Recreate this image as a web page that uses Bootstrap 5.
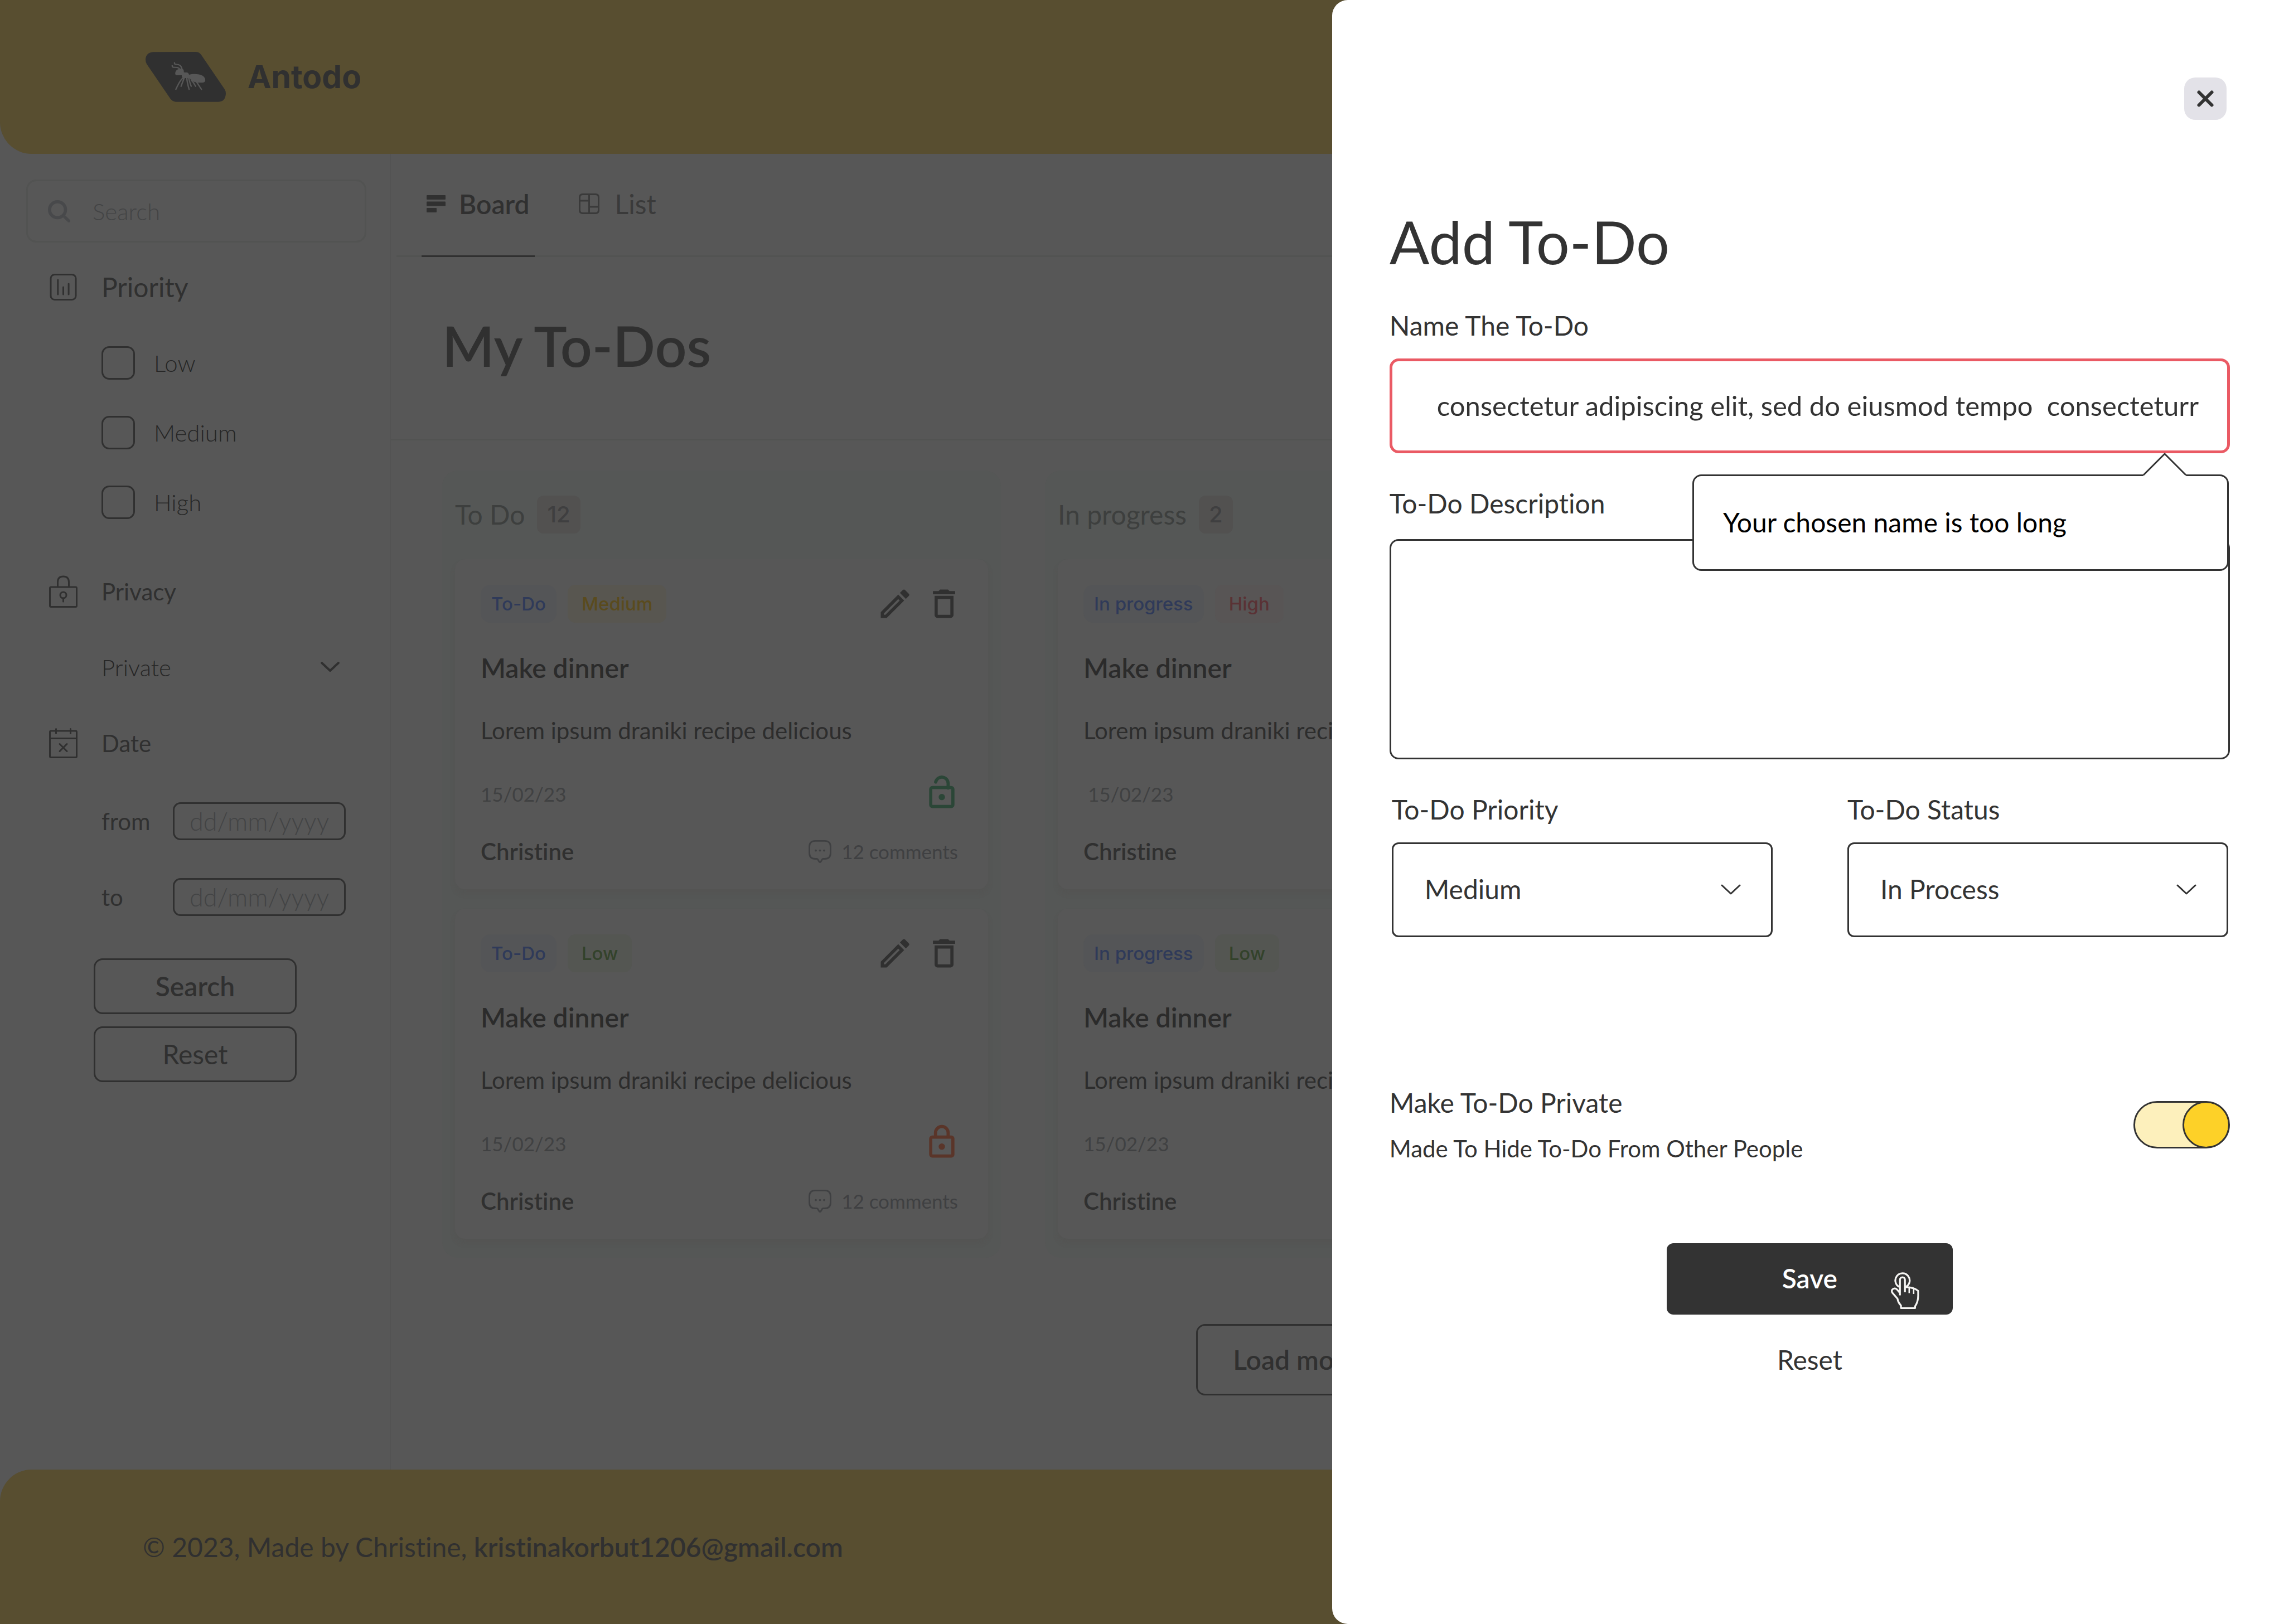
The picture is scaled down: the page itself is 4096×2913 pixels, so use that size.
<!DOCTYPE html>
<html lang="en">
<head>
<meta charset="utf-8">
<meta name="viewport" content="width=device-width, initial-scale=1">
<title>Antodo</title>
<link href="https://cdn.jsdelivr.net/npm/bootstrap@5.3.0/dist/css/bootstrap.min.css" rel="stylesheet">
<style>
:root{--ink:#303030;--dim:#575757;--rule:#525352;--dark:#333}
body{font-family:Lato,"Open Sans",sans-serif;font-size:48px;line-height:60px;font-variant-ligatures:none;color:var(--ink);background:var(--dim)}
.fw-semi{font-weight:600}
.text-m{font-size:42px}
.text-s{font-size:35px}
svg{display:block;flex:none}

/* header and footer */
.brand-bar{height:276px;background:#584e30;border-radius:0 0 57px 57px;padding:0 261px}
.brand-link{gap:39px;color:var(--ink);font:700 57px/60px Inter,sans-serif}
.foot-bar{height:277px;background:#584e30;border-radius:57px 57px 0 0;padding:0 256px}
.foot-bar a{color:var(--ink)}

/* sidebar */
.side{flex:0 0 701px;min-width:0;padding:46px 42px 0 47px;border-right:2px solid #535353}
.search-box{height:113px;border:3px solid var(--rule);border-radius:18px;padding:0 36px;gap:40px}
.bare-input{border:0;background:transparent;padding:0;width:100%;min-width:0;color:var(--ink)}
.side input::placeholder{color:#434445;opacity:1;font-weight:300}
.side-head{height:60px;padding-left:41px;gap:43px}
.side-icon{width:51px}
.side-body{padding-left:135px;padding-right:37px}
.pick{gap:34px;height:60px;margin-bottom:65px;font-weight:300;color:#262626}
.pick .form-check-input{width:60px;height:60px;margin:0;border:3px solid var(--ink);border-radius:14px;background-color:transparent}
.privacy-pick{height:60px;width:100%;border:0;color:#262626;font-weight:300;padding:0;appearance:none;background:url("data:image/svg+xml,%3Csvg xmlns='http://www.w3.org/2000/svg' viewBox='0 0 36 22'%3E%3Cpath d='M3 3l15 14L33 3' fill='none' stroke='%23303030' stroke-width='4' stroke-linecap='round' stroke-linejoin='round'/%3E%3C/svg%3E") no-repeat right 10px center/36px 22px}
.date-row{height:68px}
.date-row + .date-row{margin-top:68px}
.date-row input{width:310px;height:68px;border:3px solid var(--ink);border-radius:14px;background:transparent;padding:0 27px;font-size:45px;color:var(--ink)}
.side-btns{padding:0 125px 0 121px;gap:22px}
.line-btn{border:3px solid var(--ink);border-radius:16px;color:var(--ink);font-size:48px;line-height:60px;padding:17px 0}
.mt-head{margin-top:50px}
.mt-body{margin-top:76px}
.mt-next{margin-top:100px}

/* board */
.board{flex:1 1 0;min-width:0}
.tabs{margin-left:10px;padding-left:45px;gap:79px;border-bottom:3px solid var(--rule)}
.tab{height:185px;margin-bottom:-3px;padding:0 9px 6px 9px;gap:24px;color:var(--ink)}
.tab.is-on{border-bottom:3px solid var(--ink);padding-bottom:3px}
.tab-quiet{padding-left:0;gap:28px;color:#3a3a3a}
.page-title{font-size:100px;line-height:120px;padding:98px 92px 108px;border-bottom:3px solid var(--rule)}
.lanes{display:grid;grid-template-columns:repeat(3,1fr);gap:79px;padding:54px 139px 0 92px}
.lane{background:#555756;border-radius:28px;padding:45px 23px 34px}
.lane-head{height:68px;gap:22px;margin-bottom:46px;color:#3d3f3e}
.count{height:68px;border-radius:12px;background:#525150;padding:0 18px;font:500 40px/68px Inter,sans-serif;color:#3f3f40}
.todo{background:var(--dim);border-radius:18px;padding:46px 45px 38px 46px;box-shadow:0 8px 10px rgba(78,74,74,.2)}
.todo + .todo{margin-top:35px}
.todo h3{font-size:48px;line-height:60px;margin:51px 0 52px;color:#2b2b2b}
.todo-text{margin-bottom:50px;color:#2d2d2d}
.todo-meta{height:68px;margin-bottom:39px;color:#404142;padding-right:4px}
.talk{gap:18px;color:#3f4042;margin-right:9px}
.tag{height:68px;border-radius:14px;padding:0 25px;font:500 33px/68px Inter,sans-serif}
.tag-state{background:#545557;color:#2f3a59;padding:0 19px;border-radius:18px}
.tag-medium{background:#585650;color:#5a4b1e}
.tag-high{background:#585555;color:#5a3235}
.tag-low{background:#545652;color:#33422b}
.gap-tags{gap:20px}
.icon-btn{border:0;background:transparent;padding:0;color:var(--ink)}
.open{color:#2b4637}
.shut{color:#5a3529}
.load{margin:119px 0 0 1444px;width:356px;padding:31px 0}

/* drawer */
.drawer.offcanvas{width:41.68%;border:0;border-radius:28px 0 0 28px;padding:139px 97px 0 103px;color:var(--dark);background:#fff;overflow-y:auto}
.close-btn{width:76px;height:76px;border:0;border-radius:20px;background:#e3e2e8;padding:0;margin-right:6px}
.drawer h2{font-size:106px;line-height:120px;margin:158px 0 61px}
.field{border:3px solid var(--dark);border-radius:16px;width:100%;color:var(--dark);background-color:#fff}
.field-name{height:170px;border:5px solid #ea5a64;padding:0 40px 2px 80px;margin-top:29px;font-size:49px}
.field-desc{display:block;height:395px;margin-top:34px;resize:none}
.mt-label{margin-top:60px}
.pair{gap:134px;padding:0 3px 0 4px;margin-top:60px}
.pair > div{flex:1 1 0;min-width:0}
.pair select{height:170px;border-radius:12px;margin-top:29px;padding:0 56px 3px;appearance:none;background:#fff url("data:image/svg+xml,%3Csvg xmlns='http://www.w3.org/2000/svg' viewBox='0 0 36 20'%3E%3Cpath d='M2 2l16 15L34 2' fill='none' stroke='%23333' stroke-width='3' stroke-linecap='round' stroke-linejoin='round'/%3E%3C/svg%3E") no-repeat right 54px center/36px 20px}
.hint{position:absolute;top:38px;right:2px;z-index:2;width:962px;height:173px;border:3px solid var(--dark);border-radius:16px;background:#fff;color:#000;padding:53px 52px}
.hint svg{position:absolute;top:-43px;right:73px}
.private-row{margin-top:267px}
.private-row p{margin:22px 0 0}
.toggle.form-check-input{width:173px;height:85px;margin:0 0 4px;flex:none;border:3px solid var(--dark);border-radius:43px;background:#fdf0bc url("data:image/svg+xml,%3Csvg xmlns='http://www.w3.org/2000/svg' viewBox='0 0 85 85'%3E%3Ccircle cx='42.5' cy='42.5' r='41' fill='%23fdd128' stroke='%23333' stroke-width='3'/%3E%3C/svg%3E") no-repeat right center/85px 85px border-box}
.actions{margin-top:140px;gap:51px}
.save-btn{width:513px;height:128px;border:0;border-radius:12px;background:var(--dark);color:#fff;padding:0 0 3px}
.save-btn svg{position:absolute;left:401px;top:51px}
.plain-btn{border:0;background:transparent;padding:0;color:var(--dark)}
</style>
</head>
<body class="d-flex flex-column min-vh-100">

<svg class="d-none">
  <symbol id="i-edit" viewBox="0 0 24 24"><path fill="currentColor" d="M14.06 9.02l.92.92L5.92 19H5v-.92l9.06-9.06M17.66 3c-.25 0-.51.1-.7.29l-1.83 1.83 3.75 3.75 1.83-1.83a.996.996 0 0 0 0-1.41l-2.34-2.34c-.2-.2-.45-.29-.71-.29zm-3.6 3.19L3 17.25V21h3.75L17.81 9.94l-3.75-3.75z"/></symbol>
  <symbol id="i-trash" viewBox="0 0 24 24"><path fill="currentColor" d="M16 9v10H8V9h8m-1.500-6h-5l-1 1H5v2h14V4h-3.500l-1-1zM18 7H6v12c0 1.100.9 2 2 2h8c1.100 0 2-.9 2-2V7z"/></symbol>
  <symbol id="i-open" viewBox="0 0 24 24"><g fill="none" stroke="currentColor" stroke-width="2"><rect x="5" y="8" width="14" height="12" rx="1"/><path stroke-linecap="round" d="M8.100 4.500a4 4 0 0 1 7.900 .8v3"/></g><circle cx="12" cy="14" r="2" fill="currentColor"/></symbol>
  <symbol id="i-shut" viewBox="0 0 24 24"><g fill="none" stroke="currentColor" stroke-width="2"><rect x="5" y="8" width="14" height="12" rx="1"/><path d="M8 8.300V5.300a4 4 0 0 1 8 0v3"/></g><circle cx="12" cy="14" r="2" fill="currentColor"/></symbol>
  <symbol id="i-talk" viewBox="0 0 174 175"><path fill="none" stroke="currentColor" stroke-width="12" stroke-linejoin="round" d="M51 6h72q45 0 45 45v47q0 45-45 45h-12q-4 0-7 4l-9 15q-8 13-16 0l-9-15q-3-4-7-4H51q-45 0-45-45V51Q6 6 51 6z"/><g fill="currentColor"><circle cx="55" cy="79" r="8"/><circle cx="87" cy="79" r="8"/><circle cx="119" cy="79" r="8"/></g></symbol>
</svg>

<header class="brand-bar d-flex align-items-center">
  <a href="#" class="brand-link d-flex align-items-center text-decoration-none">
    <svg width="144" height="90" viewBox="71 93 527 380" preserveAspectRatio="none" aria-hidden="true">
      <path fill="#303030" d="M122 94L402 93Q424 94 438 118L590 376Q598 390 598 410Q595 470 550 472H270Q248 470 233 447L79 186Q71 172 71 150Q74 98 122 94z"/>
      <g fill="#575757"><path d="M266 262C264 234 282 222 300 221Q306 217 316 222Q324 232 323 248Q334 249 345 249Q352 252 357 266C380 257 425 258 445 274Q464 288 463 310Q460 326 444 326H412Q404 321 400 322Q388 324 378 312L357 291H322Q307 288 309 270H276Q268 270 266 262z"/></g>
      <g fill="none" stroke="#575757" stroke-width="9" stroke-linecap="round" stroke-linejoin="round"><path d="M309 224C308 198 292 186 268 188Q261 186 261 176M296 224C285 208 270 210 254 210Q246 208 246 198M317 290C294 312 288 335 270 377M325 290L304 354M342 290C343 320 350 350 357 377M354 290Q362 330 371 354M370 305Q388 326 400 354M404 318L438 377"/></g>
    </svg>
    Antodo
  </a>
</header>

<main class="d-flex flex-grow-1">
  <aside class="side">
    <div class="search-box d-flex align-items-center">
      <svg width="40" height="40" viewBox="60 60 168 168" aria-hidden="true"><g fill="none" stroke="#48494b"><circle cx="132" cy="132" r="60" stroke-width="24"/><path d="M180 180L217 216" stroke-width="22" stroke-linecap="round"/></g></svg>
      <input type="search" class="bare-input text-m" placeholder="Search" aria-label="Search to-dos">
    </div>

    <div class="side-head mt-head d-flex align-items-center">
      <svg class="side-icon" height="48" viewBox="0 0 48 48" aria-hidden="true"><g fill="none" stroke="#303030" stroke-width="3"><rect x="1.500" y="1.500" width="45" height="45" rx="7"/><path stroke-linecap="round" d="M14.300 11v26M24 24v13M33.600 18v19"/></g></svg>
      <span>Priority</span>
    </div>
    <div class="side-body mt-body text-m">
      <div class="pick d-flex align-items-center"><input class="form-check-input" type="checkbox" id="p-low"><label for="p-low">Low</label></div>
      <div class="pick d-flex align-items-center"><input class="form-check-input" type="checkbox" id="p-medium"><label for="p-medium">Medium</label></div>
      <div class="pick d-flex align-items-center mb-0"><input class="form-check-input" type="checkbox" id="p-high"><label for="p-high">High</label></div>
    </div>

    <div class="side-head mt-next d-flex align-items-center text-m">
      <svg class="side-icon" height="58" viewBox="0 0 51 58" aria-hidden="true"><g fill="none" stroke="#303030" stroke-width="3"><rect x="1.500" y="21" width="48" height="35.500" rx="2"/><path d="M15.500 21v-9q0-10 10-10t10 10v9"/><circle cx="25.500" cy="35.500" r="5.500"/><path stroke-linecap="round" d="M25.500 41v6"/></g></svg>
      <label for="privacy">Privacy</label>
    </div>
    <div class="side-body mt-body text-m">
      <select class="privacy-pick" id="privacy"><option>Private</option><option>Public</option></select>
    </div>

    <div class="side-head mt-body d-flex align-items-center text-m">
      <svg class="side-icon" height="54" viewBox="0 0 51 54" aria-hidden="true"><g fill="none" stroke="#303030" stroke-width="3" stroke-linecap="round"><rect x="1.500" y="5" width="48" height="47.500" rx="2"/><path d="M1.500 18.500h48M12.500 1.500v8M38.500 1.500v8M19 28.500l13 13M32 28.500l-13 13"/></g></svg>
      <span>Date</span>
    </div>
    <div class="side-body mt-body text-m">
      <div class="date-row d-flex align-items-center justify-content-between"><label for="d-from">from</label><input type="text" id="d-from" placeholder="dd/mm/yyyy"></div>
      <div class="date-row d-flex align-items-center justify-content-between"><label for="d-to">to</label><input type="text" id="d-to" placeholder="dd/mm/yyyy"></div>
    </div>
    <div class="side-btns mt-body d-flex flex-column">
      <button type="button" class="btn line-btn fw-semi">Search</button>
      <button type="button" class="btn line-btn">Reset</button>
    </div>
  </aside>

  <section class="board">
    <nav class="tabs d-flex">
      <a href="#" class="tab is-on d-flex align-items-center text-decoration-none fw-semi">
        <svg width="34" height="31" viewBox="0 0 34 31" aria-hidden="true"><g fill="#303030"><rect width="34" height="8" rx="1"/><rect y="11.500" width="34" height="8" rx="1"/><rect y="23" width="18" height="8" rx="1"/></g></svg>
        Board
      </a>
      <a href="#" class="tab tab-quiet d-flex align-items-center text-decoration-none">
        <svg width="37" height="37" viewBox="0 0 37 37" aria-hidden="true"><path fill="none" stroke="#3a3a3a" stroke-width="3" d="M7 1.500h23q5.500 0 5.500 5.500v23q0 5.500-5.500 5.500H7Q1.500 35.500 1.500 30V7Q1.500 1.500 7 1.500zM18.500 1.500v34M1.500 13h17M18.500 24h17"/></svg>
        List
      </a>
    </nav>
    <h1 class="page-title fw-semi mb-0">My To-Dos</h1>

    <div class="lanes">
      <div class="lane">
        <div class="lane-head d-flex align-items-center">To Do <span class="count">12</span></div>
        <article class="todo">
          <div class="d-flex justify-content-between">
            <div class="d-flex gap-tags"><span class="tag tag-state">To-Do</span><span class="tag tag-medium">Medium</span></div>
            <div class="d-flex gap-tags"><button class="icon-btn" aria-label="Edit"><svg width="68" height="68"><use href="#i-edit"/></svg></button><button class="icon-btn" aria-label="Delete"><svg width="68" height="68"><use href="#i-trash"/></svg></button></div>
          </div>
          <h3 class="fw-semi">Make dinner</h3>
          <p class="todo-text text-m">Lorem ipsum draniki recipe delicious</p>
          <div class="todo-meta d-flex justify-content-between align-items-center text-s"><span>15/02/23</span><svg class="open" width="68" height="68"><use href="#i-open"/></svg></div>
          <div class="d-flex justify-content-between align-items-center"><span class="text-m fw-semi">Christine</span><span class="talk d-flex align-items-center text-s"><svg width="41" height="41"><use href="#i-talk"/></svg>12 comments</span></div>
        </article>
        <article class="todo">
          <div class="d-flex justify-content-between">
            <div class="d-flex gap-tags"><span class="tag tag-state">To-Do</span><span class="tag tag-low">Low</span></div>
            <div class="d-flex gap-tags"><button class="icon-btn" aria-label="Edit"><svg width="68" height="68"><use href="#i-edit"/></svg></button><button class="icon-btn" aria-label="Delete"><svg width="68" height="68"><use href="#i-trash"/></svg></button></div>
          </div>
          <h3 class="fw-semi">Make dinner</h3>
          <p class="todo-text text-m">Lorem ipsum draniki recipe delicious</p>
          <div class="todo-meta d-flex justify-content-between align-items-center text-s"><span>15/02/23</span><svg class="shut" width="68" height="68"><use href="#i-shut"/></svg></div>
          <div class="d-flex justify-content-between align-items-center"><span class="text-m fw-semi">Christine</span><span class="talk d-flex align-items-center text-s"><svg width="41" height="41"><use href="#i-talk"/></svg>12 comments</span></div>
        </article>
      </div>

      <div class="lane">
        <div class="lane-head d-flex align-items-center">In progress <span class="count">2</span></div>
        <article class="todo">
          <div class="d-flex gap-tags"><span class="tag tag-state">In progress</span><span class="tag tag-high">High</span></div>
          <h3 class="fw-semi">Make dinner</h3>
          <p class="todo-text text-m">Lorem ipsum draniki recipe delicious</p>
          <div class="todo-meta d-flex align-items-center text-s ps-2"><span>15/02/23</span></div>
          <div class="text-m fw-semi">Christine</div>
        </article>
        <article class="todo">
          <div class="d-flex gap-tags"><span class="tag tag-state">In progress</span><span class="tag tag-low">Low</span></div>
          <h3 class="fw-semi">Make dinner</h3>
          <p class="todo-text text-m">Lorem ipsum draniki recipe delicious</p>
          <div class="todo-meta d-flex align-items-center text-s"><span>15/02/23</span></div>
          <div class="text-m fw-semi">Christine</div>
        </article>
      </div>
    </div>
    <button type="button" class="btn line-btn load fw-semi">Load more</button>
  </section>
</main>

<footer class="foot-bar d-flex align-items-center">
  <span>© 2023, Made by Christine, <a href="#" class="fw-semi text-decoration-none">kristinakorbut1206@gmail.com</a></span>
</footer>

<div class="drawer offcanvas offcanvas-end show" data-bs-backdrop="false" data-bs-scroll="true" tabindex="-1" aria-labelledby="drawer-title">
  <button type="button" class="close-btn d-flex align-items-center justify-content-center align-self-end flex-shrink-0" aria-label="Close">
    <svg width="32" height="32" viewBox="0 0 32 32"><path d="M4.500 4.500l23 23M27.500 4.500l-23 23" stroke="#333" stroke-width="6" stroke-linecap="round"/></svg>
  </button>
  <form>
    <h2 id="drawer-title" class="fw-normal">Add To-Do</h2>
    <label class="d-block" for="f-name">Name The To-Do</label>
    <div class="position-relative">
      <input class="field field-name d-block" id="f-name" type="text" value="consectetur adipiscing elit, sed do eiusmod tempo  consecteturr">
      <div class="position-relative">
        <div class="hint" role="alert">Your chosen name is too long
          <svg width="78" height="43" viewBox="0 0 78 43" aria-hidden="true"><path d="M0 43L39 3l39 40z" fill="#fff"/><path d="M1 41L39 3l38 38" fill="none" stroke="#333" stroke-width="3"/></svg>
        </div>
      </div>
    </div>
    <label class="d-block mt-label" for="f-desc">To-Do Description</label>
    <textarea class="field field-desc" id="f-desc"></textarea>
    <div class="pair d-flex">
      <div><label class="d-block" for="f-priority">To-Do Priority</label><select class="field" id="f-priority"><option>Medium</option><option>Low</option><option>High</option></select></div>
      <div><label class="d-block" for="f-status">To-Do Status</label><select class="field" id="f-status"><option>In Process</option><option>To Do</option></select></div>
    </div>
    <div class="private-row d-flex justify-content-between align-items-center">
      <div><label class="d-block" for="f-private">Make To-Do Private</label><p class="text-m">Made To Hide To-Do From Other People</p></div>
      <input class="form-check-input toggle" type="checkbox" role="switch" id="f-private" checked>
    </div>
    <div class="actions d-flex flex-column align-items-center">
      <button type="button" class="save-btn position-relative fw-semi">Save
        <svg width="52" height="68" viewBox="80 80 226 290" aria-hidden="true"><g fill="none" stroke="#f7f6f4" stroke-width="14" stroke-linejoin="round"><path d="M150 196A56 56 0 1 1 200 196M155 262V141a19.500 19.500 0 0 1 39 0V238M196 197C245 197 275 208 297 227V265C297 300 290 322 273 347V361H163V342C145 322 138 305 136 288L96 242C84 224 98 205 120 209C135 213 142 232 155 242"/><path stroke-width="11" d="M227 198V245M262 206V251"/></g></svg>
      </button>
      <button type="reset" class="plain-btn">Reset</button>
    </div>
  </form>
</div>
<script src="https://cdn.jsdelivr.net/npm/bootstrap@5.3.0/dist/js/bootstrap.bundle.min.js"></script>
</body>
</html>
